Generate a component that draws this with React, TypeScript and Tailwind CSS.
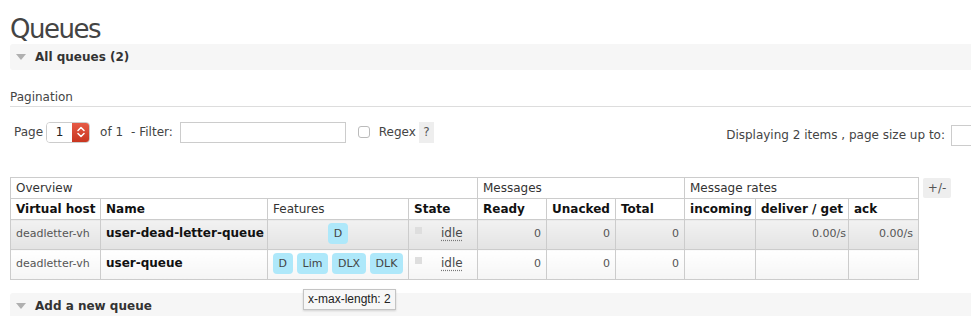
import React from "react";

function Tri() {
  return (
    <span className="inline-block w-0 h-0 border-l-[5px] border-r-[5px] border-t-[6px] border-l-transparent border-r-transparent border-t-[#b0b0b0]" />
  );
}

function Badge({ children }: { children: React.ReactNode }) {
  return (
    <span className="inline-block h-[21px] leading-[21px] px-[6px] rounded-[4px] bg-[#aee8fa] text-[11px] text-[#444]">
      {children}
    </span>
  );
}

function State() {
  return (
    <div className="flex items-start pl-[1px]">
      <span className="mt-[4px] w-[7px] h-[7px] bg-[#dedede]" />
      <span className="ml-[19px] text-[12px] underline decoration-dotted decoration-[#777] underline-offset-[3px]">idle</span>
    </div>
  );
}

export default function App() {
  const th1 = "border border-[#cccccc] px-[5px] py-0 leading-[20px] text-left font-normal text-[12px] text-[#333] whitespace-nowrap overflow-visible";
  const th2 = "border border-[#cccccc] px-[5px] py-0 leading-[20px] text-left font-bold text-[12px] text-[#111] whitespace-nowrap overflow-visible";
  const r1 = "border border-[#cccccc] pt-[3px] pb-[5px] leading-[21px] align-top whitespace-nowrap bg-linear-to-b from-[#f2f2f2] to-[#e3e3e3]";
  const r2 = "border border-[#cccccc] pt-[3px] pb-[5px] leading-[21px] align-top whitespace-nowrap bg-linear-to-b from-[#ffffff] to-[#f5f5f5]";
  const num = "text-right pr-[5px] text-[11px] text-[#555]";

  return (
    <div className="relative w-[971px] h-[316px] overflow-hidden bg-white text-[#484848] font-['DejaVu_Sans',Verdana,sans-serif]">
      <div className="w-[1010px] pl-[10px]">
        <h1 className="pt-[15px] text-[26px] leading-[29px] tracking-[-1.5px] font-normal text-[#444]">Queues</h1>

        <div className="h-[26px] bg-[#f6f6f6] rounded-[3px] flex items-center pl-[6px]">
          <Tri />
          <span className="ml-[9px] text-[12px] font-bold text-[#333]">All queues (2)</span>
        </div>

        <div className="mt-[20px] pb-[2px] border-b border-[#dddddd] text-[12px] leading-[14px] text-[#444]">Pagination</div>

        <div className="mt-[14px] flex items-start justify-between h-[22px] text-[12px] text-[#444]">
          <div className="flex items-center h-[22px]">
            <span className="ml-[4px]">Page</span>
            <div className="ml-[3px] w-[44px] h-[21px] rounded-[4px] border border-[#cccccc] flex overflow-hidden">
              <div className="w-[25px] bg-white flex items-center justify-center text-[12px] text-[#222]">1</div>
              <div className="flex-1 bg-linear-to-b from-[#e65a45] to-[#c8351f] flex items-center justify-center">
                <svg width="8" height="12" viewBox="0 0 8 12" fill="none" stroke="white" strokeWidth="1.5" strokeLinecap="round" strokeLinejoin="round">
                  <path d="M1 4.5 L4 1.5 L7 4.5" />
                  <path d="M1 7.5 L4 10.5 L7 7.5" />
                </svg>
              </div>
            </div>
            <span className="ml-[10px]">of 1</span>
            <span className="ml-[8px]">- Filter:</span>
            <div className="ml-[7px] w-[166px] h-[21px] border border-[#cccccc] bg-white" />
            <div className="ml-[12px] w-[12px] h-[12px] rounded-[3px] border border-[#bbbbbb] bg-white" />
            <span className="ml-[9px]">Regex</span>
            <span className="ml-[3px] w-[15px] h-[21px] bg-[#eeeeee] flex items-center justify-center text-[#555]">?</span>
          </div>
          <div className="flex items-center h-[22px] mt-[3px]">
            <span>Displaying 2 items , page size up to:</span>
            <div className="ml-[6px] w-[59px] h-[21px] border border-[#cccccc] bg-white" />
          </div>
        </div>

        <div className="mt-[34px] flex items-start gap-[4px]">
          <table className="border-collapse table-fixed w-[908px]">
            <colgroup>
              <col className="w-[90px]" />
              <col className="w-[167px]" />
              <col className="w-[141px]" />
              <col className="w-[69px]" />
              <col className="w-[69px]" />
              <col className="w-[69px]" />
              <col className="w-[69px]" />
              <col className="w-[71px]" />
              <col className="w-[93px]" />
              <col className="w-[70px]" />
            </colgroup>
            <thead>
              <tr>
                <th colSpan={4} className={th1}>Overview</th>
                <th colSpan={3} className={th1}>Messages</th>
                <th colSpan={3} className={th1}>Message rates</th>
              </tr>
              <tr>
                <th className={th2}>Virtual host</th>
                <th className={th2}>Name</th>
                <th className={th1}>Features</th>
                <th className={th2}>State</th>
                <th className={th2}>Ready</th>
                <th className={th2}>Unacked</th>
                <th className={th2}>Total</th>
                <th className={th2}>incoming</th>
                <th className={th2}>deliver / get</th>
                <th className={th2}>ack</th>
              </tr>
            </thead>
            <tbody>
              <tr>
                <td className={`${r1} pl-[5px] text-[11px] text-[#555]`}>deadletter-vh</td>
                <td className={`${r1} pl-[5px] text-[12px] font-bold text-[#111]`}>user-dead-letter-queue</td>
                <td className={r1}>
                  <div className="flex justify-center gap-[3.5px]"><Badge>D</Badge></div>
                </td>
                <td className={`${r1} pl-[5px]`}><State /></td>
                <td className={`${r1} ${num}`}>0</td>
                <td className={`${r1} ${num}`}>0</td>
                <td className={`${r1} ${num}`}>0</td>
                <td className={`${r1} ${num}`}></td>
                <td className={`${r1} text-right pr-[2px] text-[11px] text-[#555]`}>0.00/s</td>
                <td className={`${r1} ${num}`}>0.00/s</td>
              </tr>
              <tr>
                <td className={`${r2} pl-[5px] text-[11px] text-[#555]`}>deadletter-vh</td>
                <td className={`${r2} pl-[5px] text-[12px] font-bold text-[#111]`}>user-queue</td>
                <td className={r2}>
                  <div className="flex justify-center gap-[3.5px]">
                    <Badge>D</Badge>
                    <Badge>Lim</Badge>
                    <Badge>DLX</Badge>
                    <Badge>DLK</Badge>
                  </div>
                </td>
                <td className={`${r2} pl-[5px]`}><State /></td>
                <td className={`${r2} ${num}`}>0</td>
                <td className={`${r2} ${num}`}>0</td>
                <td className={`${r2} ${num}`}>0</td>
                <td className={`${r2} ${num}`}></td>
                <td className={`${r2} ${num}`}></td>
                <td className={`${r2} ${num}`}></td>
              </tr>
            </tbody>
          </table>
          <span className="mt-[1px] h-[20px] w-[28px] bg-[#eeeeee] rounded-[2px] flex items-center justify-center text-[12px] text-[#555]">+/-</span>
        </div>

        <div className="mt-[13px] h-[26px] bg-[#f6f6f6] rounded-[3px] flex items-center pl-[6px]">
          <Tri />
          <span className="ml-[9px] text-[12px] font-bold text-[#333]">Add a new queue</span>
        </div>
      </div>

      <div className="absolute left-[303px] top-[289px] h-[21px] px-[4px] leading-[19px] bg-[#f7f7f7] border border-[#c4c4c4] shadow-[0_1px_2px_rgba(0,0,0,0.15)] text-[12px] text-[#222] font-['Liberation_Sans',Arial,sans-serif]">
        x-max-length: 2
      </div>
    </div>
  );
}
